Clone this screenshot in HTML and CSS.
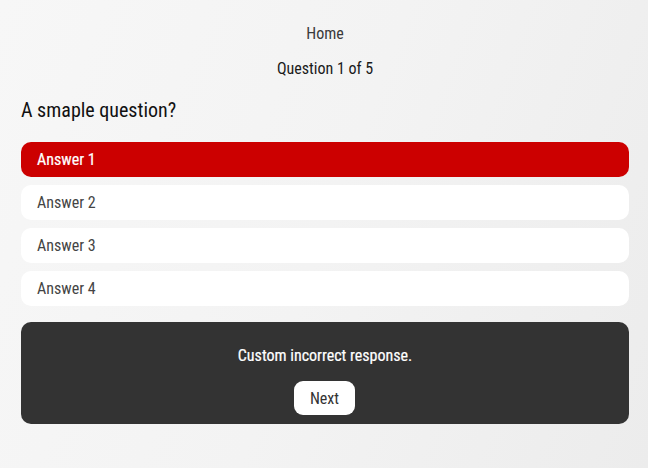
FILE: index.html
```html
<!DOCTYPE html>
<html lang="en">
<head>
    <meta charset="UTF-8">
    <meta name="viewport" content="width=device-width, initial-scale=1.0">
    <title>Quiz</title>
    <link rel="stylesheet" href="styles.css">
</head>
<body>

    <div class="quiz">
        <!-- Header -->
        <div class="quiz-nav">
            <a class="home-link" href="#">Home</a>
            <p class="progress">Question 1 of 5</p>
        </div>

        <h2 class="question">A smaple question?</h2>

        <!-- Answers -->
        <ul class="answers">
            <li class="answer wrong">Answer 1</li>
            <li class="answer">Answer 2</li>
            <li class="answer">Answer 3</li>
            <li class="answer">Answer 4</li>
        </ul>

        <!-- Feedback -->
        <div class="feedback">
            <p>Custom incorrect response.</p>
            <button class="next-btn">Next</button>
        </div>
    </div>

</body>
</html>
```

FILE: styles.css
```css
/* General Styles */
* {
    margin: 0;
    padding: 0;
    box-sizing: border-box;
    font-family: "Roboto Condensed", Roboto, sans-serif;
    font-stretch: 80%;
}

body {
    min-height: 100vh;
    background: linear-gradient(110deg, #f7f7f7 0%, #f3f3f3 50%, #ececec 100%);
    color: #222;
}

.quiz {
    padding: 23px 19px 20px 21px;
}

/* Header */
.quiz-nav {
    display: flex;
    flex-direction: column;
    align-items: center;
    gap: 14px;
}

.home-link {
    color: #3a3a3a;
    font-size: 16px;
    line-height: 21px;
    text-decoration: none;
}

.progress {
    color: #1a1a1a;
    font-size: 16px;
    line-height: 21px;
}

.question {
    margin-top: 18px;
    font-size: 20px;
    line-height: 26px;
    font-weight: 400;
    color: #111;
}

/* Answers */
.answers {
    list-style: none;
    margin-top: 19px;
    display: flex;
    flex-direction: column;
    gap: 8px;
}

.answer {
    background: #fff;
    border-radius: 10px;
    height: 35px;
    padding: 0 16px;
    display: flex;
    align-items: center;
    font-size: 16px;
    color: #444;
    cursor: pointer;
}

.answer.wrong {
    background: #cc0000;
    color: #fff;
    -webkit-text-stroke: 0.2px #fff;
}

/* Feedback */
.feedback {
    margin-top: 16px;
    background: #333;
    border-radius: 10px;
    padding: 24px 20px 9px;
    display: flex;
    flex-direction: column;
    align-items: center;
    gap: 15px;
}

.feedback p {
    color: #fff;
    font-size: 16px;
    line-height: 20px;
    -webkit-text-stroke: 0.2px #fff;
}

.next-btn {
    background: #fff;
    color: #333;
    border: none;
    border-radius: 9px;
    width: 61px;
    height: 34px;
    margin-right: 1px;
    font-size: 16px;
    cursor: pointer;
}
```
